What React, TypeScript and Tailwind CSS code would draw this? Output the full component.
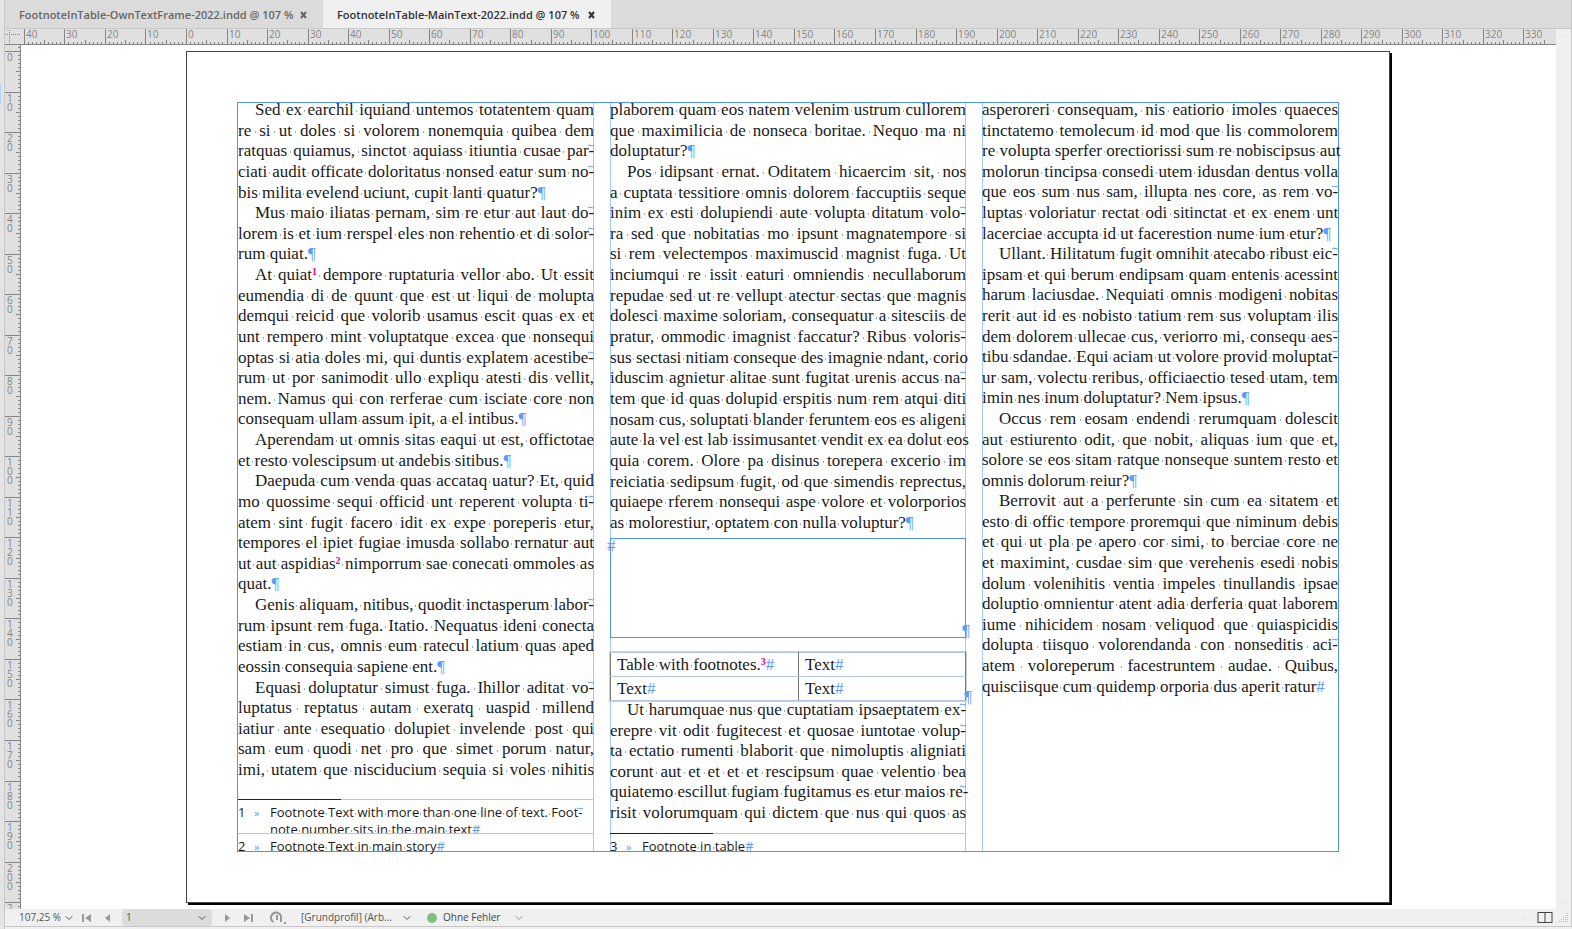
import { ChevronDown, ChevronLeft, ChevronRight, ChevronUp } from 'lucide-react';

const column1 = `>Sed ex earchil iquiand untemos totatentem quam
re si ut doles si volorem nonemquia quibea dem
ratquas quiamus, sinctot aquiass itiuntia cusae par-
ciati audit officate doloritatus nonsed eatur sum no-
bis milita evelend uciunt, cupit lanti quatur?¶
>Mus maio iliatas pernam, sim re etur aut laut do-
lorem is et ium rerspel eles non rehentio et di solor-
rum quiat.¶
>At quiat^1 dempore ruptaturia vellor abo. Ut essit
eumendia di de quunt que est ut liqui de molupta
demqui reicid que volorib usamus escit quas ex et
unt rempero mint voluptatque excea que nonsequi
optas si atia doles mi, qui duntis explatem acestibe-
rum ut por sanimodit ullo expliqu atesti dis vellit,
nem. Namus qui con rerferae cum isciate core non
consequam ullam assum ipit, a el intibus.¶
>Aperendam ut omnis sitas eaqui ut est, offictotae
et resto volescipsum ut andebis sitibus.¶
>Daepuda cum venda quas accataq uatur? Et, quid
mo quossime sequi officid unt reperent volupta ti-
atem sint fugit facero idit ex expe poreperis etur,
tempores el ipiet fugiae imusda sollabo rernatur aut
ut aut aspidias^2 nimporrum sae conecati ommoles as
quat.¶
>Genis aliquam, nitibus, quodit inctasperum labor-
rum ipsunt rem fuga. Itatio. Nequatus ideni conecta
estiam in cus, omnis eum ratecul latium quas aped
eossin consequia sapiene ent.¶
>Equasi doluptatur simust fuga. Ihillor aditat vo-
luptatus reptatus autam exeratq uaspid millend
iatiur ante esequatio dolupiet invelende post qui
sam eum quodi net pro que simet porum natur,
imi, utatem que nisciducium sequia si voles nihitis`;

const column2Top = `plaborem quam eos natem velenim ustrum cullorem
que maximilicia de nonseca boritae. Nequo ma ni
doluptatur?¶
>Pos idipsant ernat. Oditatem hicaercim sit, nos
a cuptata tessitiore omnis dolorem faccuptiis seque
inim ex esti dolupiendi aute volupta ditatum volo-
ra sed que nobitatias mo ipsunt magnatempore si
si rem velectempos maximuscid magnist fuga. Ut
inciumqui re issit eaturi omniendis necullaborum
repudae sed ut re vellupt atectur sectas que magnis
dolesci maxime soloriam, consequatur a sitesciis de
pratur, ommodic imagnist faccatur? Ribus voloris-
sus sectasi nitiam conseque des imagnie ndant, corio
iduscim agnietur alitae sunt fugitat urenis accus na-
tem que id quas dolupid erspitis num rem atqui diti
nosam cus, soluptati blander feruntem eos es aligeni
aute la vel est lab issimusantet vendit ex ea dolut eos
quia corem. Olore pa disinus torepera excerio im
reiciatia sedipsum fugit, od que simendis reprectus,
quiaepe rferem nonsequi aspe volore et volorporios
as molorestiur, optatem con nulla voluptur?¶`;

const column2Bottom = `>Ut harumquae nus que cuptatiam ipsaeptatem ex-
erepre vit odit fugitecest et quosae iuntotae volup-
ta ectatio rumenti blaborit que nimoluptis aligniati
corunt aut et et et et rescipsum quae velentio bea
quiatemo escillut fugiam fugitamus es etur maios re-
risit volorumquam qui dictem que nus qui quos as`;

const column3 = `asperoreri consequam, nis eatiorio imoles quaeces
tinctatemo temolecum id mod que lis commolorem
re volupta sperfer orectiorissi sum re nobiscipsus aut
molorun tincipsa consedi utem idusdan dentus volla
que eos sum nus sam, illupta nes core, as rem vo-
luptas voloriatur rectat odi sitinctat et ex enem unt
lacerciae accupta id ut facerestion nume ium etur?¶
>Ullant. Hilitatum fugit omnihit atecabo ribust eic-
ipsam et qui berum endipsam quam entenis acessint
harum laciusdae. Nequiati omnis modigeni nobitas
rerit aut id es nobisto tatium rem sus voluptam ilis
dem dolorem ullecae cus, veriorro mi, consequ aes-
tibu sdandae. Equi aciam ut volore provid moluptat-
ur sam, volectu reribus, officiaectio tesed utam, tem
imin nes inum doluptatur? Nem ipsus.¶
>Occus rem eosam endendi rerumquam dolescit
aut estiurento odit, que nobit, aliquas ium que et,
solore se eos sitam ratque nonseque suntem resto et
omnis dolorum reiur?¶
>Berrovit aut a perferunte sin cum ea sitatem et
esto di offic tempore proremqui que niminum debis
et qui ut pla pe apero cor simi, to berciae core ne
et maximint, cusdae sim que verehenis esedi nobis
dolum volenihitis ventia impeles tinullandis ipsae
doluptio omnientur atent adia derferia quat laborem
iume nihicidem nosam veliquod que quiaspicidis
dolupta tiisquo volorendanda con nonseditis aci-
atem voloreperum facestruntem audae. Quibus,
quisciisque cum quidemp orporia dus aperit ratur#`;

// Splits a line into words, spaces, footnote references and end marks
function Marked({ text }: { text: string }) {
  const parts = text.split(/( |\^\d|[¶#»])/).filter(Boolean);
  return (
    <>
      {parts.map((part, i) => {
        if (part === ' ') {
          return (
            <span
              key={i}
              className="bg-[linear-gradient(#7fb2fa,#7fb2fa)] bg-[length:1px_2px] bg-[position:50%_60%] bg-no-repeat"
            >
              {' '}
            </span>
          );
        }
        if (part[0] === '^') {
          return (
            <sup key={i} className="text-[10px] leading-none font-bold text-[#e6007e]">
              {part[1]}
            </sup>
          );
        }
        if (part === '¶' || part === '#' || part === '»') {
          return (
            <span key={i} className="text-[#5a9cf8]">
              {part}
            </span>
          );
        }
        return <span key={i}>{part}</span>;
      })}
    </>
  );
}

// Marks a discretionary hyphen at the end of a line
function HyphenMark() {
  return (
    <svg className="absolute top-[3px] right-0" width="6" height="3" fill="none" stroke="#5a9cf8">
      <path d="M0 2q1-1.500 3-.500t3-.500" />
    </svg>
  );
}

function Line({ text }: { text: string }) {
  const indented = text.startsWith('>');
  const body = indented ? text.slice(1) : text;
  const isLast = /[¶#]$/.test(body);
  return (
    <div
      className={`relative h-5 leading-5 whitespace-nowrap ${indented ? 'pl-[17px]' : ''} ${
        isLast ? '' : '[text-align-last:justify]'
      }`}
    >
      <Marked text={body} />
      {body.endsWith('-') && <HyphenMark />}
    </div>
  );
}

function TextBlock({ text, className }: { text: string; className: string }) {
  return (
    <div className={`flex flex-col justify-between ${className}`}>
      {text.split('\n').map((line, i) => (
        <Line key={i} text={line} />
      ))}
    </div>
  );
}

// Pixels per millimetre at the current zoom
const MM = 4.053;

function HorizontalRuler() {
  const mms = Array.from({ length: 376 }, (_, i) => i - 40);
  return (
    <svg className="h-4 w-full" shapeRendering="crispEdges">
      {mms.map((t) => {
        const x = Math.round(165 + t * MM) + 0.5;
        const y = t % 10 === 0 ? 0 : t % 5 === 0 ? 11 : 13;
        return <line key={t} x1={x} x2={x} y1={y} y2={16} stroke="#858585" />;
      })}
      {Array.from({ length: 38 }, (_, i) => i * 10 - 40).map((t) => (
        <text key={t} x={Math.round(165 + t * MM) + 2} y={9} fontSize={10} fill="#858585">
          {Math.abs(t)}
        </text>
      ))}
    </svg>
  );
}

function VerticalRuler() {
  const mms = Array.from({ length: 213 }, (_, i) => i - 1);
  const labels = Array.from({ length: 21 }, (_, i) => i * 10);
  return (
    <svg className="h-full w-[15px]" shapeRendering="crispEdges">
      {mms.map((t) => {
        const y = Math.round(6 + t * MM) + 0.5;
        const x = t % 10 === 0 ? 0 : t % 5 === 0 ? 11 : 13;
        return <line key={t} x1={x} x2={16} y1={y} y2={y} stroke="#858585" />;
      })}
      {labels.map((t) =>
        String(t)
          .split('')
          .map((digit, i) => (
            <text key={`${t}-${i}`} x={2} y={Math.round(6 + t * MM) + 10 + i * 9} fontSize={10} fill="#858585">
              {digit}
            </text>
          )),
      )}
      <text x={2} y={Math.round(6 + 210 * MM) + 10} fontSize={10} fill="#858585">
        2
      </text>
    </svg>
  );
}

function Tabs() {
  return (
    <div className="flex h-7 text-[11px] font-semibold">
      <div className="flex items-center gap-2 pt-[2px] pr-4 pl-[14px] text-[#666]">
        <span className="w-[273px] whitespace-nowrap">FootnoteInTable-OwnTextFrame-2022.indd @ 107 %</span>
        <button aria-label="Close FootnoteInTable-OwnTextFrame-2022.indd" className="leading-none">
          <CloseIcon />
        </button>
      </div>
      <div className="flex items-center gap-2 bg-[#f0f0f0] pt-[2px] pr-4 pl-[14px] text-[#333]">
        <span className="w-[243px] whitespace-nowrap">FootnoteInTable-MainText-2022.indd @ 107 %</span>
        <button aria-label="Close FootnoteInTable-MainText-2022.indd" className="leading-none">
          <CloseIcon />
        </button>
      </div>
    </div>
  );
}

function CloseIcon() {
  return (
    <svg width="7" height="8" viewBox="0 0 7 8" stroke="currentColor" strokeWidth="2">
      <path d="M1 1l5 6M6 1L1 7" />
    </svg>
  );
}

function StatusBar() {
  return (
    <div className="flex h-[17px] shrink-0 items-center bg-[#f0f0f0] text-[10px] text-[#555]">
      <button className="flex w-[66px] items-center justify-between pl-[14px] whitespace-nowrap">
        107,25 % <ChevronDown size={12} strokeWidth={2} className="-mr-1 shrink-0" />
      </button>
      <button aria-label="First page" className="ml-[11px]">
        <svg width="9" height="8" fill="#999">
          <path d="M0 0h2v8H0zM9 0v8L3 4z" />
        </svg>
      </button>
      <button aria-label="Previous page" className="ml-[14px]">
        <svg width="5" height="8" fill="#999">
          <path d="M5 0v8L0 4z" />
        </svg>
      </button>
      <button className="ml-3 flex h-full w-[90px] items-center justify-between rounded-sm bg-[#dcdcdc] px-1">
        1 <ChevronDown size={12} strokeWidth={2} />
      </button>
      <button aria-label="Next page" className="ml-[13px]">
        <svg width="5" height="8" fill="#999">
          <path d="M0 0v8l5-4z" />
        </svg>
      </button>
      <button aria-label="Last page" className="ml-[14px]">
        <svg width="9" height="8" fill="#999">
          <path d="M7 0h2v8H7zM0 0v8l6-4z" />
        </svg>
      </button>
      <button aria-label="Open document status" className="ml-4">
        <svg width="18" height="14" fill="none" stroke="#999">
          <path d="M4.500 11A5 5 0 1 1 12 7v4" strokeWidth="2" />
          <path d="M7 4h2v5H7z" fill="#999" stroke="none" />
          <path d="M15 11h2v2h-2z" fill="#999" stroke="none" />
        </svg>
      </button>
      <button className="ml-[14px] flex w-[112px] items-center justify-between whitespace-nowrap">
        [Grundprofil] (Arb... <ChevronDown size={12} strokeWidth={2} />
      </button>
      <span className="ml-[14px] size-[10px] rounded-full bg-[#7fbf7f]" />
      <button className="ml-[6px] flex w-[82px] items-center justify-between text-[#444]">
        Ohne Fehler <ChevronDown size={12} strokeWidth={2} className="text-[#999]" />
      </button>
      <ChevronLeft size={9} className="ml-3 text-[#ddd]" />
      <ChevronRight size={10} className="ml-auto text-[#ddd]" />
      <button aria-label="Split layout view" className="ml-2">
        <svg width="16" height="11" fill="#fafafa">
          <path d="M1 0v11M8 0v11M15 0v11" stroke="#999" strokeWidth="2" />
          <path d="M1 .5h14M1 10.500h14" stroke="#444" />
        </svg>
      </button>
      <svg width="10" height="10" className="mr-[2px] ml-[6px]" fill="#bbb">
        <path d="M8 0h1v1H8zM6 2h1v1H6zM8 2h1v1H8zM4 4h1v1H4zM6 4h1v1H6zM8 4h1v1H8zM2 6h1v1H2zM4 6h1v1H4zM6 6h1v1H6zM8 6h1v1H8zM0 8h1v1H0zM2 8h1v1H2zM4 8h1v1H4zM6 8h1v1H6zM8 8h1v1H8z" />
      </svg>
    </div>
  );
}

function Footnote({ number, lines, className }: { number: number; lines: string[]; className: string }) {
  return (
    <div className={`flex border-t border-[#a3c8fb] pt-1 text-[13px] leading-[17px] ${className}`}>
      <span className="w-4">{number}</span>
      <span className="w-4 text-[11px] text-[#5a9cf8]">»</span>
      <div className="font-['Open_Sans',sans-serif] whitespace-nowrap">
        {lines.map((line) => (
          <div key={line} className="relative">
            <Marked text={line} />
            {line.endsWith('-') && <HyphenMark />}
          </div>
        ))}
      </div>
    </div>
  );
}

function FootnoteRule() {
  return <div className="relative z-10 -mb-px h-px w-[103px] bg-[#222]" />;
}

function StoryTable() {
  const cell = 'h-[24px] border border-[#777] border-y-[#b4c8e4] p-0 pl-[6px] leading-5';
  return (
    <table className="w-full table-fixed border-collapse outline-1 outline-[#cfcfcf]">
      <tbody>
        <tr>
          <td className={`w-[188px] ${cell}`}>
            <Marked text="Table with footnotes.^3" />
            <span className="text-[#5a9cf8]">#</span>
          </td>
          <td className={cell}>
            <Marked text="Text#" />
          </td>
        </tr>
        <tr>
          <td className={cell}>
            <Marked text="Text#" />
          </td>
          <td className={cell}>
            <Marked text="Text#" />
          </td>
        </tr>
      </tbody>
    </table>
  );
}

function Page() {
  return (
    <div className="w-[1204px] shrink-0 border border-[#444] bg-white px-[50px] py-[50px] shadow-[2px_2px_0_#000]">
      <div className="grid h-[750px] grid-cols-3 gap-x-4 border border-[#4f94f5] font-['Liberation_Serif',serif] text-[17px] text-[#1a1a1a]">
        <div className="shadow-[inset_-1px_0_#a3c8fb]">
          <TextBlock text={column1} className="-mt-[3px] h-[680px]" />
          <div className="mt-[19px] font-['Open_Sans',sans-serif]">
            <FootnoteRule />
            <Footnote
              number={1}
              lines={['Footnote Text with more than one line of text. Foot-', 'note number sits in the main text#']}
              className="h-[34px] overflow-hidden"
            />
            <Footnote number={2} lines={['Footnote Text in main story#']} className="h-[18px]" />
          </div>
        </div>
        <div className="shadow-[inset_1px_0_#a3c8fb,inset_-1px_0_#a3c8fb]">
          <TextBlock text={column2Top} className="-mt-[3px] h-[433px]" />
          <div className="relative mt-[5px] h-[100px] border border-[#4f94f5] leading-4 text-[#5a9cf8]">
            <span className="absolute -top-px -left-1">#</span>
            <span className="absolute right-[-5px] bottom-[-2px]">¶</span>
          </div>
          <div className="relative mt-[14px]">
            <StoryTable />
            <span className="absolute right-[-6px] bottom-[-4px] leading-4 text-[#5a9cf8]">¶</span>
          </div>
          <TextBlock text={column2Bottom} className="-mt-px h-[123px]" />
          <div className="mt-[10px] font-['Open_Sans',sans-serif]">
            <FootnoteRule />
            <Footnote number={3} lines={['Footnote in table#']} className="h-[17px]" />
          </div>
        </div>
        <div className="shadow-[inset_1px_0_#a3c8fb]">
          <TextBlock text={column3} className="-mt-[3px] h-[597px]" />
        </div>
      </div>
    </div>
  );
}

export default function App() {
  return (
    <div className="flex h-screen overflow-hidden bg-[#f0f0f0] font-['Open_Sans',sans-serif]">
      <div className="flex w-[5px] shrink-0 flex-col border-r border-[#c8c8c8] bg-[#e4e4e4]">
        <div className="mt-[84px] h-5 w-px bg-[#b4d2f5]" />
      </div>
      <div className="mb-[2px] flex min-w-0 flex-1 flex-col border-r border-b border-[#c8c8c8] bg-[#dbdbdb]">
        <Tabs />
        <div className="flex min-h-0 flex-1 border-t border-[#c8c8c8]">
          <div className="flex min-w-0 flex-1 flex-col">
            <div className="flex h-4 shrink-0 border-b border-[#858585] bg-[#e0e0e0]">
              <svg className="h-4 w-4 shrink-0" stroke="#858585" strokeDasharray="1 1">
                <path d="M4.500 1v14M0 5.500h15" fill="none" />
              </svg>
              <HorizontalRuler />
            </div>
            <div className="flex min-h-0 flex-1">
              <div className="shrink-0 border-r border-[#858585] bg-[#e0e0e0]">
                <VerticalRuler />
              </div>
              <main className="flex min-w-0 flex-1 items-start overflow-hidden bg-white pt-[6px] pl-[165px]">
                <Page />
              </main>
            </div>
          </div>
          <div className="flex w-[15px] shrink-0 flex-col items-center justify-between bg-[#f0f0f0] py-[2px] text-[#ddd]">
            <ChevronUp size={10} />
            <ChevronDown size={10} />
          </div>
        </div>
        <StatusBar />
      </div>
    </div>
  );
}
